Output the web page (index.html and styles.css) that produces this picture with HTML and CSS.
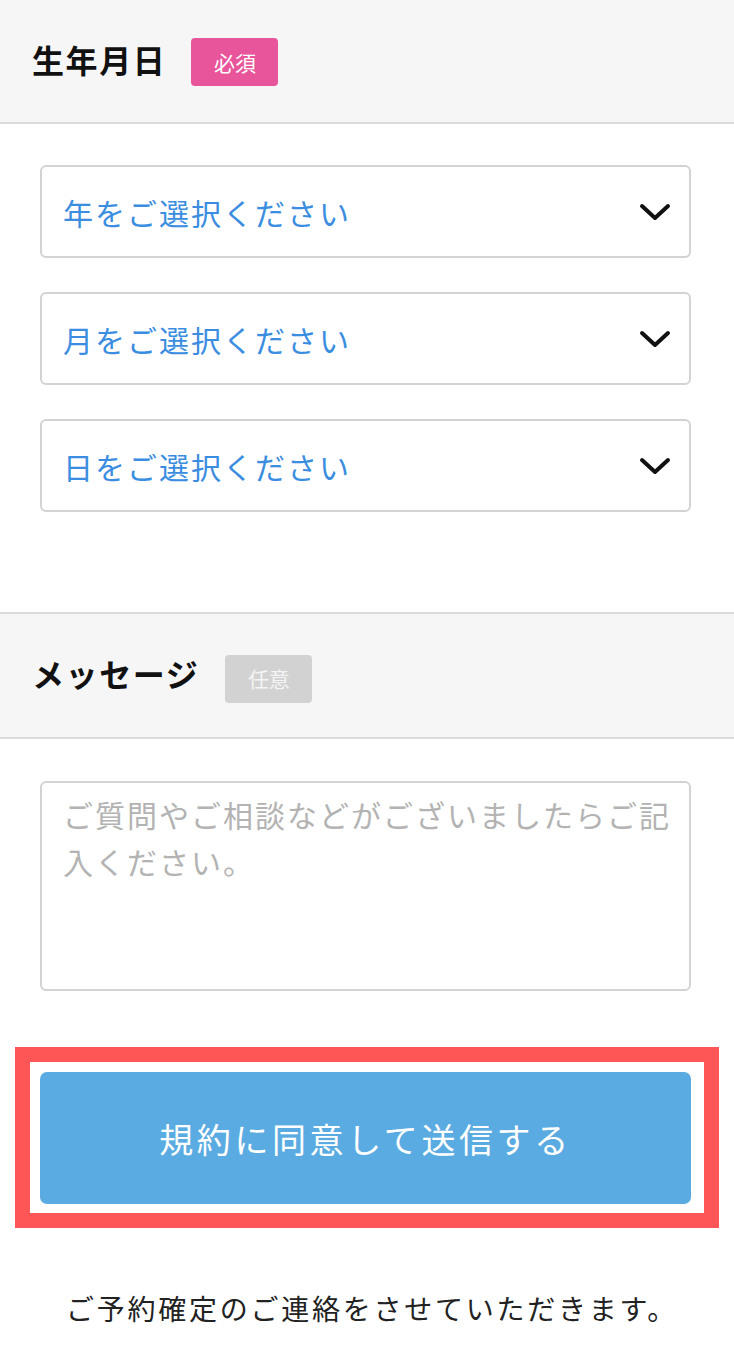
FILE: index.html
```html
<!DOCTYPE html>
<html lang="ja">
<head>
<meta charset="utf-8">
<title>フォーム</title>
<link rel="stylesheet" href="styles.css">
</head>
<body>
<div class="page">
  <div class="section-head head-first">
    <span class="head-title">生年月日</span>
    <span class="badge badge-required">必須</span>
  </div>
  <div class="fields fields-date">
    <div class="select">
      <span class="select-text">年をご選択ください</span>
      <svg class="chevron" width="32" height="18" viewBox="0 0 32 18"><polyline points="3,3 16,15 29,3" fill="none" stroke="#111" stroke-width="4" stroke-linecap="round" stroke-linejoin="round"/></svg>
    </div>
    <div class="select">
      <span class="select-text">月をご選択ください</span>
      <svg class="chevron" width="32" height="18" viewBox="0 0 32 18"><polyline points="3,3 16,15 29,3" fill="none" stroke="#111" stroke-width="4" stroke-linecap="round" stroke-linejoin="round"/></svg>
    </div>
    <div class="select">
      <span class="select-text">日をご選択ください</span>
      <svg class="chevron" width="32" height="18" viewBox="0 0 32 18"><polyline points="3,3 16,15 29,3" fill="none" stroke="#111" stroke-width="4" stroke-linecap="round" stroke-linejoin="round"/></svg>
    </div>
  </div>
  <div class="section-head head-second">
    <span class="head-title">メッセージ</span>
    <span class="badge badge-optional">任意</span>
  </div>
  <div class="fields fields-message">
    <textarea class="message" placeholder="ご質問やご相談などがございましたらご記入ください。"></textarea>
    <div class="highlight">
      <button class="submit" type="button">規約に同意して送信する</button>
    </div>
    <p class="note">ご予約確定のご連絡をさせていただきます。</p>
  </div>
</div>
</body>
</html>
```

FILE: styles.css
```css
html, body {
  margin: 0;
  padding: 0;
  background: #ffffff;
}

body {
  font-family: "Noto Sans CJK JP", "Noto Sans", sans-serif;
  color: #111;
}

.page {
  width: 734px;
}

.section-head {
  display: flex;
  align-items: center;
  background: #f6f6f6;
  padding-left: 32px;
  box-sizing: border-box;
}

.head-first {
  height: 124px;
  border-bottom: 2px solid #dadada;
}

.head-second {
  height: 127px;
  border-top: 2px solid #dadada;
  border-bottom: 2px solid #dadada;
}

.head-title {
  font-size: 32px;
  font-weight: 700;
  letter-spacing: 1.6px;
  line-height: 1;
  color: #111;
  margin-bottom: 5px;
}

.badge {
  display: flex;
  align-items: center;
  justify-content: center;
  width: 87px;
  height: 48px;
  border-radius: 4px;
  font-size: 21px;
  color: #fff;
  line-height: 1;
}

.head-first .badge {
  margin-left: 25px;
  margin-top: 2px;
}

.head-second .badge {
  margin-left: 26px;
  margin-top: 6px;
}

.badge-required {
  background: #e9559a;
}

.badge-optional {
  background: #d2d2d2;
  color: #f4f4f4;
}

.fields {
  padding-left: 40px;
  padding-right: 43px;
}

.fields-date {
  display: flex;
  flex-direction: column;
  gap: 34px;
  padding-top: 41px;
  padding-bottom: 100px;
}

.select {
  display: flex;
  align-items: center;
  justify-content: space-between;
  height: 93px;
  box-sizing: border-box;
  border: 2px solid #d3d3d3;
  border-radius: 6px;
  padding-left: 21px;
  padding-right: 18px;
  background: #fff;
}

.select-text {
  font-size: 30px;
  letter-spacing: 2px;
  color: #3a8de0;
  line-height: 1;
}

.chevron {
  display: block;
  flex: none;
}

.fields-message {
  padding-top: 42px;
  display: flex;
  flex-direction: column;
}

.message {
  display: block;
  width: 651px;
  height: 210px;
  box-sizing: border-box;
  border: 2px solid #d3d3d3;
  border-radius: 6px;
  padding: 8px 10px 8px 21px;
  font-family: "Noto Sans CJK JP", "Noto Sans", sans-serif;
  font-size: 30px;
  letter-spacing: 2px;
  line-height: 47px;
  resize: none;
  color: #333;
  background: #fff;
  outline: none;
}

.message::placeholder {
  color: #b3b3b3;
}

.highlight {
  margin: 56px -28px 0 -25px;
  border: 15px solid #fe5656;
  padding: 10px 13px 9px 10px;
  background: #fff;
}

.submit {
  display: block;
  width: 100%;
  height: 132px;
  border: none;
  border-radius: 7px;
  background: #5aabe1;
  color: #fff;
  font-family: "Noto Sans CJK JP", "Noto Sans", sans-serif;
  font-size: 34px;
  letter-spacing: 3.6px;
  padding: 0;
  cursor: pointer;
}

.note {
  margin: 60px 0 0 0;
  padding-left: 13px;
  text-align: center;
  font-size: 28px;
  letter-spacing: 2.75px;
  line-height: 40px;
  color: #222;
}
```
